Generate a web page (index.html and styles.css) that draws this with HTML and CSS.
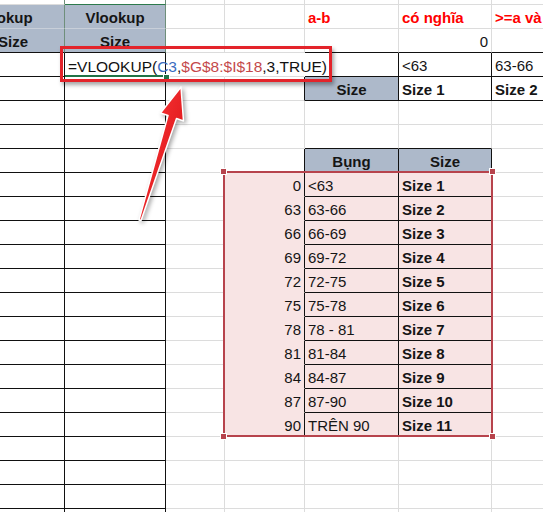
FILE: index.html
```html
<!DOCTYPE html>
<html lang="vi">
<head>
<meta charset="utf-8">
<title>VLOOKUP</title>
<link rel="stylesheet" href="styles.css">
</head>
<body>
<div class="page">
  <div class="sheet">
    <!-- row 0 -->
    <div class="c gr"></div><div class="c gr gt"></div><div class="c"></div><div class="c"></div><div class="c"></div><div class="c"></div><div class="c"></div>
    <!-- row 1 -->
    <div class="c hd gr sl">Vlookup</div><div class="c hd gr">Vlookup</div><div class="c"></div><div class="c"></div><div class="c red">a-b</div><div class="c red">có nghĩa</div><div class="c red">&gt;=a và</div>
    <!-- row 2 -->
    <div class="c hd gr bb sr">Size</div><div class="c hd gr bb">Size</div><div class="c"></div><div class="c"></div><div class="c bb"></div><div class="c bb r">0</div><div class="c bb"></div>
    <!-- row 3 -->
    <div class="c bb br"></div>
    <div class="c br fx">=VLOOKUP(<span class="ref1">C3</span>,<span class="ref2">$G$8:$I$18</span>,3,TRUE)</div>
    <div class="c nr"></div><div class="c nr"></div><div class="c bb br"></div><div class="c bb br">&lt;63</div><div class="c bb">63-66</div>
    <!-- row 4 -->
    <div class="c bb br"></div><div class="c bb br"></div><div class="c"></div><div class="c br"></div><div class="c hd bb br">Size</div><div class="c b bb br">Size 1</div><div class="c b bb">Size 2</div>
    <!-- row 5 -->
    <div class="c bb br"></div><div class="c bb br"></div><div class="c"></div><div class="c"></div><div class="c"></div><div class="c"></div><div class="c"></div>
    <!-- row 6 -->
    <div class="c bb br"></div><div class="c bb br"></div><div class="c"></div><div class="c"></div><div class="c bb"></div><div class="c bb"></div><div class="c"></div>
    <!-- row 7 -->
    <div class="c bb br"></div><div class="c bb br"></div><div class="c"></div><div class="c br"></div><div class="c hd bb br">Bụng</div><div class="c hd bb br">Size</div><div class="c"></div>
    <!-- rows 8-18 -->
    <div class="c bb br"></div><div class="c bb br"></div><div class="c"></div><div class="c pk br r">0</div><div class="c pk bb br">&lt;63</div><div class="c pk b bb br">Size 1</div><div class="c"></div>
    <div class="c bb br"></div><div class="c bb br"></div><div class="c"></div><div class="c pk br r">63</div><div class="c pk bb br">63-66</div><div class="c pk b bb br">Size 2</div><div class="c"></div>
    <div class="c bb br"></div><div class="c bb br"></div><div class="c"></div><div class="c pk br r">66</div><div class="c pk bb br">66-69</div><div class="c pk b bb br">Size 3</div><div class="c"></div>
    <div class="c bb br"></div><div class="c bb br"></div><div class="c"></div><div class="c pk br r">69</div><div class="c pk bb br">69-72</div><div class="c pk b bb br">Size 4</div><div class="c"></div>
    <div class="c bb br"></div><div class="c bb br"></div><div class="c"></div><div class="c pk br r">72</div><div class="c pk bb br">72-75</div><div class="c pk b bb br">Size 5</div><div class="c"></div>
    <div class="c bb br"></div><div class="c bb br"></div><div class="c"></div><div class="c pk br r">75</div><div class="c pk bb br">75-78</div><div class="c pk b bb br">Size 6</div><div class="c"></div>
    <div class="c bb br"></div><div class="c bb br"></div><div class="c"></div><div class="c pk br r">78</div><div class="c pk bb br">78 - 81</div><div class="c pk b bb br">Size 7</div><div class="c"></div>
    <div class="c bb br"></div><div class="c bb br"></div><div class="c"></div><div class="c pk br r">81</div><div class="c pk bb br">81-84</div><div class="c pk b bb br">Size 8</div><div class="c"></div>
    <div class="c bb br"></div><div class="c bb br"></div><div class="c"></div><div class="c pk br r">84</div><div class="c pk bb br">84-87</div><div class="c pk b bb br">Size 9</div><div class="c"></div>
    <div class="c bb br"></div><div class="c bb br"></div><div class="c"></div><div class="c pk br r">87</div><div class="c pk bb br">87-90</div><div class="c pk b bb br">Size 10</div><div class="c"></div>
    <div class="c bb br"></div><div class="c bb br"></div><div class="c"></div><div class="c pk br r">90</div><div class="c pk bb br">TRÊN 90</div><div class="c pk b bb br">Size 11</div><div class="c"></div>
    <!-- rows 19-22 -->
    <div class="c bb br"></div><div class="c bb br"></div><div class="c"></div><div class="c"></div><div class="c"></div><div class="c"></div><div class="c"></div>
    <div class="c bb br"></div><div class="c bb br"></div><div class="c"></div><div class="c"></div><div class="c"></div><div class="c"></div><div class="c"></div>
    <div class="c bb br"></div><div class="c bb br"></div><div class="c"></div><div class="c"></div><div class="c"></div><div class="c"></div><div class="c"></div>
    <div class="c bb br"></div><div class="c bb br"></div><div class="c"></div><div class="c"></div><div class="c"></div><div class="c"></div><div class="c"></div>
  </div>

  <div class="fx-handle"></div>
  <div class="selection">
    <span class="h tl"></span><span class="h tr"></span><span class="h bl"></span><span class="h brh"></span>
  </div>
  <div class="callout"></div>
  <svg class="arrow" width="70" height="150" viewBox="0 0 70 150">
    <defs>
      <linearGradient id="ag" x1="0" y1="0" x2="1" y2="1">
        <stop offset="0" stop-color="#ff3b3b"/>
        <stop offset="1" stop-color="#d40c12"/>
      </linearGradient>
    </defs>
    <polygon points="51,7 53.5,41 46.5,38.5 11,140.5 9,140 38,35.5 30.5,33" fill="url(#ag)" stroke="#ffffff" stroke-width="1.5" stroke-linejoin="round"/>
  </svg>
</div>
</body>
</html>
```
FILE: styles.css
```css
body {
  margin: 0;
}

.page {
  position: relative;
  width: 543px;
  height: 512px;
  overflow: hidden;
  background: #ffffff;
  font-family: "Liberation Sans", Arial, sans-serif;
  font-size: 15px;
  color: #151515;
}

.sheet {
  display: grid;
  grid-template-columns: 113px 101px 59px 80px 94px 93px 100px;
  grid-auto-rows: 24px;
  margin: -19px 0 0 -48px;
  width: max-content;
}

.c {
  box-sizing: border-box;
  border-right: 1px solid #dcdcdc;
  border-bottom: 1px solid #dcdcdc;
  padding: 3px 3px 0;
  line-height: 20px;
  white-space: nowrap;
  overflow: visible;
}

.hd {
  background: #adb9ca;
  font-weight: bold;
  text-align: center;
  border-bottom-color: #c8cfd9;
  border-right-color: #c8cfd9;
}

.sl {
  padding-right: 13px;
}

.sr {
  padding-left: 13px;
}

.gr {
  border-right-color: #6f8f7b;
}

.gt {
  border-bottom-color: #2d7a4c;
}

.bb {
  border-bottom-color: #111111;
}

.br {
  border-right-color: #111111;
}

.nr {
  border-right-color: transparent;
}

.r {
  text-align: right;
}

.b {
  font-weight: bold;
}

.red {
  color: #ff0000;
  font-weight: bold;
}

.pk {
  background: #f8e4e4;
  border-bottom-color: #f8e4e4;
}

.pk.bb {
  border-bottom-color: #111111;
}

.fx {
  font-size: 15.5px;
  border-bottom: 2px solid #217346;
  padding-top: 4px;
  color: #111111;
}

.ref1 {
  color: #3a6cc0;
}

.ref2 {
  color: #c4484a;
}

.fx-handle {
  position: absolute;
  left: 163px;
  top: 74px;
  width: 5px;
  height: 5px;
  background: #217346;
  border: 1px solid #ffffff;
}

.selection {
  position: absolute;
  left: 223px;
  top: 171px;
  width: 270px;
  height: 266px;
  box-sizing: border-box;
  border: 2px solid #b7434c;
}

.h {
  position: absolute;
  width: 5px;
  height: 5px;
  background: #b7434c;
  border: 1px solid #ffffff;
}

.tl { left: -5px; top: -5px; }
.tr { right: -5px; top: -5px; }
.bl { left: -5px; bottom: -5px; }
.brh { right: -5px; bottom: -5px; }

.callout {
  position: absolute;
  left: 60px;
  top: 46px;
  width: 272px;
  height: 36px;
  box-sizing: border-box;
  border: 3px solid #e3232a;
  box-shadow: 2px 3px 4px rgba(0, 0, 0, 0.35);
}

.arrow {
  position: absolute;
  left: 130px;
  top: 80px;
  filter: drop-shadow(2px 2px 2px rgba(0, 0, 0, 0.35));
}
```
